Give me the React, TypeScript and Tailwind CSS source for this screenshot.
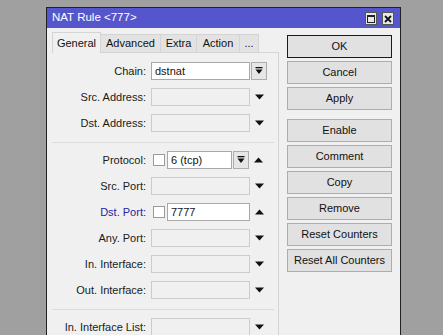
import React from "react";

const DownTri = () => (
  <svg width="9" height="6" viewBox="0 0 9 6" className="block">
    <polygon points="0,0.5 9,0.5 4.5,5.5" fill="#111" />
  </svg>
);
const UpTri = () => (
  <svg width="9" height="6" viewBox="0 0 9 6" className="block">
    <polygon points="0,5.5 9,5.5 4.5,0.5" fill="#111" />
  </svg>
);
const ComboBtn = () => (
  <div className="w-[16px] h-[18px] ml-[1px] border border-[#adadad] bg-[#e6e6e6] flex items-center justify-center">
    <svg width="8" height="8" viewBox="0 0 8 8" className="block">
      <rect x="0.5" y="0" width="7" height="1.3" fill="#111" />
      <polygon points="0.5,2.5 7.5,2.5 4,7" fill="#111" />
    </svg>
  </div>
);
const Check = () => (
  <div className="w-[12px] h-[12px] mx-[2px] shrink-0 border border-[#9a9a9a] bg-white" />
);

function Row({
  label,
  blue,
  children,
}: {
  label: string;
  blue?: boolean;
  children: React.ReactNode;
}) {
  return (
    <div className="h-[26px] flex items-center">
      <div
        className={
          "w-[96px] text-right whitespace-nowrap " +
          (blue ? "text-[#2323a8]" : "text-[#1a1a1a]")
        }
      >
        {label}
      </div>
      <div className="ml-[5px] flex items-center">{children}</div>
    </div>
  );
}

const Disabled = () => (
  <>
    <div className="w-[99px] h-[18px] border border-[#cccccc] bg-[#f0f0f0]" />
    <div className="ml-[5px]">
      <DownTri />
    </div>
  </>
);

const Sep = ({ mb }: { mb: string }) => (
  <div className={"mt-[6px] h-px bg-[#dcdcdc] mx-[2px] mr-[4px] " + mb} />
);

function Btn({ label, def, extra }: { label: string; def?: boolean; extra?: string }) {
  return (
    <div
      className={
        "h-[23px] flex items-center justify-center bg-[#e1e1e1] text-[#111] " +
        (def ? "border border-[#1a1a1a] " : "border border-[#adadad] ") +
        (extra ?? "")
      }
    >
      {label}
    </div>
  );
}

export default function App() {
  return (
    <div className="w-[443px] h-[335px] overflow-hidden bg-[#a0a0a0] pt-[7px] pl-[46px] font-['Liberation_Sans',Arial,sans-serif] text-[11px] leading-none">
      <div className="w-[355px] h-[340px] border border-[#222] bg-[#f0f0f0] flex flex-col">
        {/* Title bar */}
        <div className="h-[20px] shrink-0 bg-[#5656cc] flex items-center pl-[5px] pr-[6px]">
          <span className="text-white text-[11.5px]">NAT Rule &lt;777&gt;</span>
          <div className="ml-auto flex gap-[5px] mt-[1px]">
            <div className="w-[12px] h-[13px] bg-[#e8e8e8] border border-[#555] flex items-center justify-center">
              <div className="w-[8px] h-[8px] border border-[#222] border-t-2" />
            </div>
            <div className="w-[12px] h-[13px] bg-[#e8e8e8] border border-[#555] flex items-center justify-center">
              <svg width="8" height="8" viewBox="0 0 8 8" className="block">
                <path d="M1 1 L7 7 M7 1 L1 7" stroke="#111" strokeWidth="1.8" />
              </svg>
            </div>
          </div>
        </div>
        {/* Body */}
        <div className="flex flex-1">
          <div className="ml-[3px] w-[229px] flex flex-col">
            <div className="h-[25px] flex items-end pl-[2px]">
              <div className="w-[49px] h-[21px] border border-b-0 border-[#d4d4d4] bg-[#f0f0f0] flex items-center justify-center text-[#111]">
                General
              </div>
              <div className="w-[60px] h-[19px] border border-l-0 border-[#d4d4d4] bg-[#e3e3e3] flex items-center justify-center text-[#111]">
                Advanced
              </div>
              <div className="w-[36px] h-[19px] border border-l-0 border-[#d4d4d4] bg-[#e3e3e3] flex items-center justify-center text-[#111]">
                Extra
              </div>
              <div className="w-[43px] h-[19px] border border-l-0 border-[#d4d4d4] bg-[#e3e3e3] flex items-center justify-center text-[#111]">
                Action
              </div>
              <div className="w-[19px] h-[19px] border border-l-0 border-[#d4d4d4] bg-[#e3e3e3] flex items-center justify-center text-[#111]">
                ...
              </div>
              <div className="flex-1 border-b border-[#d4d4d4]" />
            </div>
            <div className="flex-1 border-r border-[#d4d4d4] pt-[5px] flex flex-col">
              <Row label="Chain:">
                <div className="w-[99px] h-[18px] border border-[#a8a8a8] bg-white flex items-center pl-[3px] text-[#111]">
                  dstnat
                </div>
                <ComboBtn />
              </Row>
              <Row label="Src. Address:">
                <Disabled />
              </Row>
              <Row label="Dst. Address:">
                <Disabled />
              </Row>
              <Sep mb="mb-[4px]" />
              <Row label="Protocol:">
                <Check />
                <div className="w-[65px] h-[18px] border border-[#a8a8a8] bg-white flex items-center pl-[3px] text-[#111]">
                  6 (tcp)
                </div>
                <ComboBtn />
                <div className="ml-[5px]">
                  <UpTri />
                </div>
              </Row>
              <Row label="Src. Port:">
                <Disabled />
              </Row>
              <Row label="Dst. Port:" blue>
                <Check />
                <div className="w-[83px] h-[18px] border border-[#a8a8a8] bg-white flex items-center pl-[3px] text-[#111]">
                  7777
                </div>
                <div className="ml-[5px]">
                  <UpTri />
                </div>
              </Row>
              <Row label="Any. Port:">
                <Disabled />
              </Row>
              <Row label="In. Interface:">
                <Disabled />
              </Row>
              <Row label="Out. Interface:">
                <Disabled />
              </Row>
              <Sep mb="mb-[4px]" />
              <Row label="In. Interface List:">
                <Disabled />
              </Row>
            </div>
          </div>
          <div className="ml-[8px] w-[105px] mt-[7px] flex flex-col gap-[3px]">
            <Btn label="OK" def />
            <Btn label="Cancel" />
            <Btn label="Apply" />
            <Btn label="Enable" extra="mt-[6px]" />
            <Btn label="Comment" />
            <Btn label="Copy" />
            <Btn label="Remove" />
            <Btn label="Reset Counters" />
            <Btn label="Reset All Counters" />
          </div>
        </div>
      </div>
    </div>
  );
}
